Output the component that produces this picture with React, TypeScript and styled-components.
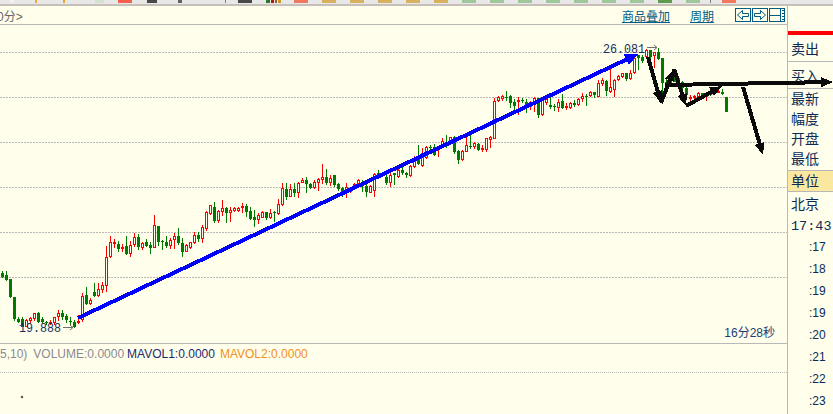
import styled, { createGlobalStyle } from 'styled-components';

const PAPER = '#ffffeb';
const NAVY = '#0b2a55';
const TEAL = '#005b85';
const LINE = '#b8b8b8';
const UP = '#ff0000';
const DOWN = '#007a00';

const GlobalStyle = createGlobalStyle`
  html, body {
    margin: 0;
    padding: 0;
    overflow: hidden;
    background: ${PAPER};
    font-family: "Liberation Sans", "Noto Sans CJK SC", sans-serif;
  }
`;

const Page = styled.div`
  position: relative;
  width: 833px;
  height: 414px;
  overflow: hidden;
  display: flex;
  flex-direction: column;
  background: ${PAPER};
`;

const TopStrip = styled.div`
  height: 4px;
  display: flex;
  background: #e8e8e8;
  border-bottom: 2px solid #c8c0b8;
  overflow: hidden;
`;

const StripBit = styled.i<{ $left: number; $width: number; $color: string }>`
  display: block;
  height: 3px;
  flex: none;
  margin-left: ${p => p.$left}px;
  width: ${p => p.$width}px;
  background: ${p => p.$color};
`;

const Body = styled.div`
  flex: 1;
  display: flex;
  min-height: 0;
`;

const Main = styled.main`
  width: 787px;
  display: flex;
  flex-direction: column;
  flex: none;
`;

const Header = styled.header`
  height: 18px;
  display: flex;
  align-items: center;
  padding-right: 2px;
  border-bottom: 1px solid ${LINE};
`;

const Period = styled.span`
  margin-left: -3px;
  font-size: 12px;
  color: #666;
  flex: 1;
`;

const HeadLink = styled.a`
  font-size: 12px;
  color: ${TEAL};
  text-decoration: underline;
  margin-right: 20px;
`;

const IconButtons = styled.div`
  display: flex;
  gap: 1px;
  margin-left: 1px;
`;

const IconButton = styled.button`
  width: 16px;
  height: 14px;
  padding: 0;
  border: 1px solid ${TEAL};
  background: transparent;
  display: flex;
  svg { display: block; }
`;

const ChartArea = styled.div`
  position: relative;
  height: 318px;
  border-bottom: 1px solid ${LINE};
  svg { display: block; }
`;

const Timer = styled.span`
  position: absolute;
  right: 12px;
  bottom: 3px;
  font-size: 12px;
  color: #1c3c78;
`;

const VolumePane = styled.div`
  position: relative;
  flex: 1;
`;

const VolumeLegend = styled.div`
  height: 29px;
  box-sizing: border-box;
  padding-top: 3px;
  display: flex;
  align-items: flex-start;
  font-size: 12px;
  white-space: nowrap;
  border-bottom: 1px dotted ${LINE};
`;

const LegendItem = styled.span<{ $color: string; $gap: number }>`
  color: ${p => p.$color};
  margin-right: ${p => p.$gap}px;
`;

const TinyDot = styled.i`
  position: absolute;
  left: 21px;
  top: 52px;
  width: 2px;
  height: 2px;
  background: #444;
  transform: rotate(45deg);
`;

const Sidebar = styled.aside`
  flex: 1;
  border-left: 1px solid ${LINE};
  display: flex;
  flex-direction: column;
  color: ${NAVY};
`;

const SideTop = styled.div`
  height: 25px;
`;

const RedBar = styled.div`
  height: 4px;
  background: #ff0000;
`;

const QuoteCell = styled.div<{ $h: number }>`
  height: ${p => p.$h}px;
  display: flex;
  align-items: center;
  padding-left: 3px;
  font-size: 14px;
  border-bottom: 1px solid ${LINE};
`;

const FieldRow = styled.div`
  height: 20px;
  line-height: 20px;
  padding-left: 3px;
  font-size: 14px;
`;

const ActiveRow = styled(FieldRow)`
  margin-top: 1px;
  background: #fbe8a0;
  border-top: 1px solid ${LINE};
  border-bottom: 1px solid ${LINE};
`;

const CityRow = styled(FieldRow)`
  height: 22px;
  line-height: 22px;
  margin-top: 1px;
`;

const Clock = styled.div`
  height: 21px;
  margin-top: 0;
  padding-left: 3px;
  font: 13.5px/23px "Liberation Mono", monospace;
`;

const TickRow = styled.div`
  height: 22px;
  line-height: 22px;
  padding-left: 21px;
  font-size: 12px;
`;

const Annotations = styled.svg`
  position: absolute;
  left: 0;
  top: 0;
  pointer-events: none;
`;

type Candle = [c: 'r' | 'g', bodyTop: number, bodyBottom: number, wickTop: number, wickBottom: number];

// candles read off 3x crops, one column every 4px: [x of first, y origin, rows in crop px]
const series: [number, number, Candle[]][] = [
  [2, 260, [
    ['g', 40, 50, 33, 55], ['g', 45, 60, 33, 62], ['g', 57, 112, 57, 115], ['g', 110, 178, 110, 182],
    ['g', 178, 185, 170, 190], ['g', 178, 200, 172, 202], ['r', 180, 200, 178, 202], ['r', 175, 183, 172, 188],
    ['r', 160, 178, 158, 182], ['g', 158, 185, 155, 188], ['g', 178, 185, 172, 190], ['g', 185, 190, 182, 195],
    ['r', 185, 190, 180, 195], ['r', 172, 190, 172, 194], ['r', 158, 172, 150, 182], ['g', 160, 172, 150, 180],
    ['g', 168, 180, 162, 190], ['g', 182, 187, 170, 195], ['g', 187, 200, 180, 205], ['r', 183, 190, 165, 192],
    ['r', 108, 180, 100, 185], ['g', 106, 133, 82, 135], ['r', 120, 133, 115, 135], ['g', 95, 108, 70, 110],
    ['r', 88, 108, 70, 110], ['r', 75, 90, 65, 98],
  ]],
  [106, 200, [
    ['r', 172, 258, 138, 275], ['r', 126, 172, 108, 174], ['r', 126, 132, 118, 145], ['g', 132, 147, 122, 155],
    ['r', 140, 145, 133, 155], ['g', 138, 162, 108, 165], ['r', 135, 162, 122, 172], ['r', 112, 135, 100, 140],
    ['g', 112, 140, 102, 150], ['r', 128, 143, 125, 150], ['g', 127, 137, 118, 140], ['g', 136, 143, 125, 162],
    ['r', 76, 143, 45, 145], ['g', 78, 125, 78, 138], ['g', 123, 127, 120, 150], ['g', 125, 137, 108, 145],
    ['r', 120, 137, 115, 147], ['r', 108, 120, 100, 148], ['g', 108, 130, 84, 135], ['g', 128, 155, 115, 170],
    ['r', 135, 155, 133, 157], ['r', 127, 145, 125, 147], ['r', 105, 130, 97, 132], ['g', 105, 117, 97, 125],
  ]],
  [202, 160, [
    ['r', 202, 236, 195, 248], ['r', 156, 206, 152, 212], ['r', 136, 162, 134, 164], ['g', 141, 182, 127, 190],
    ['r', 153, 182, 151, 188], ['r', 145, 156, 120, 168], ['g', 144, 160, 140, 190], ['r', 150, 158, 140, 186],
    ['r', 145, 152, 140, 155], ['r', 144, 152, 140, 156], ['r', 138, 143, 128, 158], ['g', 138, 156, 132, 172],
    ['g', 153, 176, 140, 180], ['g', 171, 179, 150, 200], ['r', 165, 179, 160, 192], ['r', 156, 173, 153, 175],
    ['g', 156, 173, 156, 180], ['r', 160, 173, 148, 178], ['g', 155, 158, 153, 185], ['r', 133, 163, 118, 165],
    ['r', 84, 135, 70, 138], ['g', 87, 110, 68, 120], ['r', 88, 110, 72, 112], ['g', 87, 100, 70, 112],
    ['r', 69, 98, 65, 115], ['r', 60, 68, 55, 70], ['g', 60, 72, 52, 100], ['g', 72, 84, 68, 88],
    ['r', 67, 85, 60, 88], ['r', 57, 68, 55, 92], ['r', 52, 60, 12, 72], ['g', 52, 68, 28, 75],
    ['r', 55, 70, 45, 78], ['g', 45, 75, 45, 82], ['g', 72, 87, 70, 92], ['g', 85, 95, 82, 110],
    ['r', 82, 97, 68, 115], ['r', 85, 97, 83, 99], ['r', 72, 85, 70, 87], ['r', 60, 72, 58, 74],
    ['g', 67, 78, 60, 95], ['g', 77, 95, 62, 112], ['r', 78, 98, 76, 100], ['r', 42, 92, 38, 110],
    ['g', 40, 47, 30, 55], ['r', 40, 48, 38, 50], ['g', 52, 70, 45, 75], ['r', 44, 68, 40, 82],
    ['g', 40, 45, 40, 75], ['r', 30, 50, 25, 55],
  ]],
  [402, 80, [
    ['g', 270, 280, 258, 285], ['g', 278, 284, 275, 295], ['r', 258, 288, 255, 292], ['r', 240, 262, 228, 265],
    ['g', 238, 252, 195, 255], ['r', 218, 258, 205, 262], ['r', 202, 235, 198, 237], ['g', 200, 203, 195, 212],
    ['g', 202, 225, 193, 227], ['r', 200, 206, 198, 230], ['r', 184, 200, 175, 202], ['g', 185, 190, 165, 205],
    ['r', 172, 188, 170, 190], ['g', 170, 217, 168, 222], ['g', 212, 240, 210, 252], ['r', 213, 240, 210, 243],
    ['r', 195, 215, 170, 217], ['g', 197, 198, 165, 208], ['r', 190, 202, 185, 206], ['g', 192, 210, 188, 213],
    ['r', 204, 206, 195, 215], ['r', 175, 210, 175, 215], ['r', 172, 180, 167, 205], ['r', 62, 176, 55, 178],
    ['r', 50, 64, 47, 66], ['r', 48, 57, 44, 62], ['g', 50, 52, 33, 62], ['g', 48, 68, 44, 85],
    ['g', 67, 78, 58, 100], ['r', 60, 62, 52, 105], ['g', 60, 62, 53, 68], ['g', 65, 85, 58, 98],
    ['r', 65, 80, 62, 90], ['r', 55, 70, 52, 95], ['g', 55, 105, 55, 113], ['r', 55, 105, 52, 107],
    ['r', 58, 68, 52, 75], ['g', 75, 80, 52, 88], ['g', 78, 82, 72, 92], ['r', 65, 85, 58, 95],
    ['g', 63, 84, 42, 88], ['r', 78, 80, 70, 90], ['r', 70, 85, 65, 88], ['g', 70, 75, 60, 80],
    ['r', 58, 76, 55, 78], ['r', 48, 58, 40, 65], ['g', 47, 50, 42, 78], ['r', 37, 48, 34, 52],
    ['g', 37, 44, 37, 54], ['r', 8, 50, 0, 52],
  ]],
  [602, 40, [
    ['r', 120, 132, 115, 138], ['g', 122, 152, 120, 167], ['r', 142, 155, 88, 160], ['r', 120, 150, 118, 172],
    ['r', 108, 120, 105, 122], ['r', 100, 112, 98, 115], ['g', 100, 118, 100, 122], ['r', 98, 118, 90, 120],
    ['r', 55, 98, 48, 102], ['g', 44, 55, 44, 90], ['g', 50, 62, 45, 68], ['r', 30, 50, 28, 52],
    ['g', 30, 50, 30, 60], ['r', 35, 48, 35, 85], ['g', 35, 57, 25, 60], ['g', 55, 130, 55, 165],
    ['g', 125, 135, 110, 155], ['r', 112, 130, 110, 132], ['g', 108, 125, 106, 127], ['r', 115, 130, 113, 132],
    ['g', 125, 145, 123, 147], ['g', 143, 165, 141, 167], ['r', 170, 178, 165, 190], ['r', 168, 175, 166, 177],
    ['r', 158, 172, 156, 174], ['g', 160, 172, 158, 174], ['r', 165, 170, 155, 183], ['g', 160, 165, 158, 167],
    ['g', 155, 160, 153, 162], ['r', 152, 158, 150, 160], ['g', 155, 162, 148, 165], ['g', 170, 215, 170, 217],
  ]],
];

const candles = series.flatMap(([first, origin, rows]) =>
  rows.map(([c, bt, bb, wt, wb], i) => ({
    x: first + i * 4,
    c,
    bodyTop: Math.round(origin + bt / 3),
    bodyBottom: Math.round(origin + bb / 3),
    wickTop: Math.round(origin + wt / 3),
    wickBottom: Math.round(origin + wb / 3),
  })),
);

const gridYs = [52, 97, 142, 187, 232, 277];

const Arrow = ({ x1, y1, x2, y2, color, head = 12, spread = 5 }: {
  x1: number; y1: number; x2: number; y2: number; color: string; head?: number; spread?: number;
}) => {
  const a = Math.atan2(y2 - y1, x2 - x1);
  const bx = x2 - Math.cos(a) * head;
  const by = y2 - Math.sin(a) * head;
  const nx = -Math.sin(a) * spread;
  const ny = Math.cos(a) * spread;
  return (
    <g shapeRendering="crispEdges">
      <line x1={x1} y1={y1} x2={bx} y2={by} stroke={color} strokeWidth={4} />
      <polygon points={`${x2},${y2} ${bx + nx},${by + ny} ${bx - nx},${by - ny}`} fill={color} />
    </g>
  );
};

const stripBits: [number, number, string][] = [
  [10, 14, '#f4f0e8'], [35, 37, '#f0a830'], [63, 65, '#f0a830'], [95, 104, '#d4e4cc'], [118, 132, '#f4604c'],
  [147, 157, '#484848'], [178, 182, '#606060'], [225, 226, '#808080'], [238, 252, '#484848'],
  [266, 270, '#2a7a2a'], [271, 274, '#b01818'], [275, 277, '#a06020'], [278, 281, '#c89830'], [294, 308, '#f47860'],
  [322, 336, '#d8b060'], [350, 364, '#d8b060'], [378, 392, '#d8b060'], [406, 420, '#d8b060'], [434, 448, '#d8b060'],
  [462, 476, '#a0c89c'], [490, 504, '#a0c89c'], [518, 532, '#a0c89c'], [546, 560, '#a0c89c'], [574, 588, '#a0c89c'],
  [602, 616, '#a0c89c'], [630, 644, '#a0c89c'], [658, 672, '#5c9c4c'], [686, 700, '#a0c89c'], [710, 711, '#808080'],
  [722, 736, '#f47860'],
];

const ticks = [':17', ':18', ':19', ':19', ':20', ':21', ':22', ':23'];

export default function App() {
  return (
    <Page>
      <GlobalStyle />
      <TopStrip>
        {stripBits.map(([start, end, color], i) => (
          <StripBit key={start} $left={start - (i ? stripBits[i - 1][1] : 0)} $width={end - start} $color={color} />
        ))}
      </TopStrip>
      <Body>
        <Main>
          <Header>
            <Period>0分&gt;</Period>
            <HeadLink>商品叠加</HeadLink>
            <HeadLink>周期</HeadLink>
            <IconButtons>
              <IconButton>
                <svg width="14" height="12" viewBox="0 0 14 12" fill="none" stroke={TEAL}>
                  <path d="M1.5 6 L6.5 1.5 V4.5 H12.5 V7.5 H6.5 V10.5 Z" />
                </svg>
              </IconButton>
              <IconButton>
                <svg width="14" height="12" viewBox="0 0 14 12" fill="none" stroke={TEAL}>
                  <path d="M12.5 6 L7.5 1.5 V4.5 H1.5 V7.5 H7.5 V10.5 Z" />
                </svg>
              </IconButton>
              <IconButton>
                <svg width="14" height="12" viewBox="0 0 14 12" fill="none" stroke={TEAL}>
                  <path d="M0 6.5 H10 M10.5 0 V12" />
                  <path d="M12 1.5 H14 M12 4.5 H14 M12 7.5 H14 M12 10.5 H14" />
                </svg>
              </IconButton>
            </IconButtons>
          </Header>
          <ChartArea>
            <svg width="787" height="318" viewBox="0 25 787 318">
              {gridYs.map(y => (
                <line key={y} x1="0" x2="787" y1={y + 0.5} y2={y + 0.5} stroke={LINE} strokeDasharray="2 1" />
              ))}
              <g shapeRendering="crispEdges">
                {candles.map(k => {
                  const color = k.c === 'r' ? UP : DOWN;
                  return (
                    <g key={k.x}>
                      <rect x={k.x} y={k.wickTop} width="1" height={Math.max(k.wickBottom - k.wickTop, 1)} fill={color} />
                      {k.c === 'r' ? (
                        <rect
                          x={k.x - 0.5}
                          y={k.bodyTop + 0.5}
                          width="2"
                          height={Math.max(k.bodyBottom - k.bodyTop - 1, 1)}
                          fill={PAPER}
                          stroke={color}
                        />
                      ) : (
                        <rect x={k.x - 1} y={k.bodyTop} width="3" height={Math.max(k.bodyBottom - k.bodyTop, 1)} fill={color} />
                      )}
                    </g>
                  );
                })}
              </g>
              <text x="603" y="53" fontFamily="Liberation Mono, monospace" fontSize="13.5" textLength="42" lengthAdjust="spacingAndGlyphs" fill="#14305c">26.081</text>
              <text x="19" y="332" fontFamily="Liberation Mono, monospace" fontSize="13.5" textLength="42" lengthAdjust="spacingAndGlyphs" fill="#14305c">19.888</text>
              <path d="M647 47.5 H657 M654 45 L657 47.5 L654 50" fill="none" stroke="#707070" />
              <path d="M63 327.5 H73 M70 325 L73 327.5 L70 330" fill="none" stroke="#707070" />
            </svg>
            <Timer>16分28秒</Timer>
          </ChartArea>
          <VolumePane>
            <VolumeLegend>
              <LegendItem $color="#8a8a94" $gap={6}>5,10)</LegendItem>
              <LegendItem $color="#8a8a94" $gap={3}>VOLUME:0.0000</LegendItem>
              <LegendItem $color="#1a2a70" $gap={5}>MAVOL1:0.0000</LegendItem>
              <LegendItem $color="#f09020" $gap={0}>MAVOL2:0.0000</LegendItem>
            </VolumeLegend>
            <TinyDot />
          </VolumePane>
        </Main>
        <Sidebar>
          <SideTop />
          <RedBar />
          <QuoteCell $h={26}>卖出</QuoteCell>
          <QuoteCell $h={26}>买入</QuoteCell>
          <FieldRow>最新</FieldRow>
          <FieldRow>幅度</FieldRow>
          <FieldRow>开盘</FieldRow>
          <FieldRow>最低</FieldRow>
          <ActiveRow>单位</ActiveRow>
          <CityRow>北京</CityRow>
          <Clock>17:43</Clock>
          {ticks.map((t, i) => (
            <TickRow key={i}>{t}</TickRow>
          ))}
        </Sidebar>
      </Body>
      <Annotations width="833" height="414">
        <Arrow x1={78} y1={318} x2={638} y2={54} color="#0000ff" head={13} spread={6} />
        <Arrow x1={648} y1={57} x2={661} y2={103} color="#0a0a0a" />
        <Arrow x1={661} y1={103} x2={674} y2={69} color="#0a0a0a" />
        <Arrow x1={674} y1={69} x2={686} y2={106} color="#0a0a0a" />
        <Arrow x1={686} y1={106} x2={722} y2={86} color="#0a0a0a" />
        <Arrow x1={665} y1={85} x2={833} y2={82} color="#0a0a0a" />
        <Arrow x1={743} y1={87} x2={763} y2={155} color="#0a0a0a" />
      </Annotations>
    </Page>
  );
}
